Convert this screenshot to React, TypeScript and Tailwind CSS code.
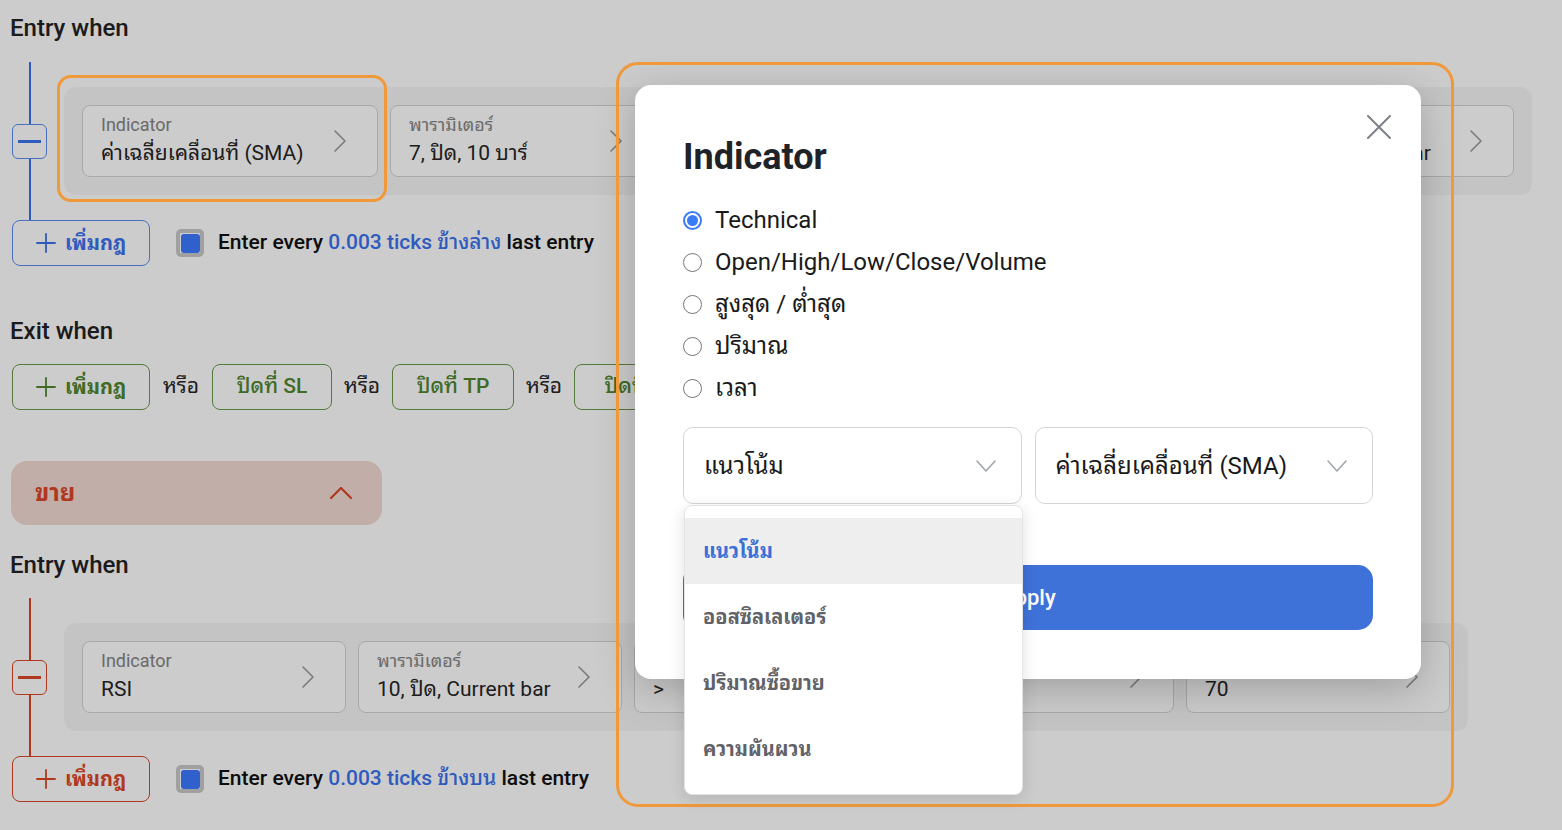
import React from "react";

type CardData = { label: string; value: string; w: string };

const buyCards: CardData[] = [
  { label: "Indicator", value: "ค่าเฉลี่ยเคลื่อนที่ (SMA)", w: "w-[296px]" },
  { label: "พารามิเตอร์", value: "7, ปิด, 10 บาร์", w: "w-[264px]" },
  { label: "เงื่อนไข", value: "ตัดขึ้น", w: "w-[264px]" },
  { label: "Indicator", value: "ค่าเฉลี่ยเคลื่อนที่ (SMA)", w: "w-[296px]" },
  { label: "พารามิเตอร์", value: "7, ปิด, Current bar", w: "w-[264px]" },
];

const sellCards: CardData[] = [
  { label: "Indicator", value: "RSI", w: "w-[264px]" },
  { label: "พารามิเตอร์", value: "10, ปิด, Current bar", w: "w-[264px]" },
  { label: "เงื่อนไข", value: ">", w: "w-[264px]" },
  { label: "เปรียบเทียบกับ", value: "ค่าคงที่", w: "w-[264px]" },
  { label: "ค่า", value: "70", w: "w-[264px]" },
];

const radios = ["Technical", "Open/High/Low/Close/Volume", "สูงสุด / ต่ำสุด", "ปริมาณ", "เวลา"];
const groups = ["แนวโน้ม", "ออสซิลเลเตอร์", "ปริมาณซื้อขาย", "ความผันผวน"];

function ChevronRight() {
  return (
    <svg width="12" height="22" viewBox="0 0 12 22" fill="none" className="shrink-0 text-[#9a9a9a]">
      <polyline points="1,1 11,11 1,21" stroke="currentColor" strokeWidth="1.6" strokeLinecap="round" strokeLinejoin="round" />
    </svg>
  );
}

function ChevronDown() {
  return (
    <svg width="20" height="12" viewBox="0 0 20 12" fill="none" className="shrink-0 text-[#a2a6ad]">
      <polyline points="1,1 10,11 19,1" stroke="currentColor" strokeWidth="1.6" strokeLinecap="round" strokeLinejoin="round" />
    </svg>
  );
}

function Plus() {
  return (
    <svg width="20" height="20" viewBox="0 0 20 20" fill="none">
      <path d="M10 1v18M1 10h18" stroke="currentColor" strokeWidth="1.8" strokeLinecap="round" />
    </svg>
  );
}

function Card({ label, value, w }: CardData) {
  return (
    <div className={`${w} flex h-[72px] shrink-0 items-center rounded-lg border border-[#d4d4d4] bg-white pl-[18px] pr-[31px]`}>
      <div className="min-w-0 flex-1">
        <div className="truncate text-[18px] leading-5 text-[#868686]">{label}</div>
        <div className="mt-1 truncate text-[21px] leading-7 text-[#262626]">{value}</div>
      </div>
      <ChevronRight />
    </div>
  );
}

function RuleBlock({ tone, cards }: { tone: "blue" | "red"; cards: CardData[] }) {
  const blue = tone === "blue";
  const line = blue ? "bg-[#3b72ef]" : "bg-[#dc4727]";
  return (
    <div className="flex h-[158px]">
      <div className="flex w-[35px] shrink-0 flex-col items-center">
        <div className={`w-[2px] flex-1 ${line}`} />
        <div
          className={`flex h-[35px] w-[35px] items-center justify-center rounded-md border bg-white ${
            blue ? "border-[#5c8bf0]" : "border-[#dc4727]"
          }`}
        >
          <div className={`h-[3px] w-[23px] ${line}`} />
        </div>
        <div className={`w-[2px] flex-1 ${line}`} />
      </div>
      <div className="ml-[17px] flex gap-3 self-center rounded-xl bg-[#f5f5f5] p-[18px]">
        {cards.map((c, i) => (
          <Card key={i} {...c} />
        ))}
      </div>
    </div>
  );
}

function AddRow({ tone, where }: { tone: "blue" | "red"; where: string }) {
  const blue = tone === "blue";
  return (
    <div className="flex items-center">
      <button
        className={`flex h-[46px] w-[138px] items-center justify-center gap-[9px] rounded-lg border bg-white ${
          blue ? "border-[#5c8bf0] text-[#3b72ef]" : "border-[#dc4727] text-[#dc4727]"
        }`}
      >
        <Plus />
        <span className="text-[20px] font-bold">เพิ่มกฎ</span>
      </button>
      <div className="ml-[26px] flex h-[28px] w-[28px] items-center justify-center rounded-[5px] border-[4px] border-[#c9c9c9] bg-white">
        <div className="h-[19px] w-[19px] rounded-[3px] bg-[#3c78ff]" />
      </div>
      <p className="ml-[14px] text-[21px] font-medium text-[#111]">
        Enter every <span className="text-[#3b72ef]">0.003 ticks {where}</span> last entry
      </p>
    </div>
  );
}

function Heading({ children }: { children: React.ReactNode }) {
  return <h2 className="-ml-[2px] text-[24px] font-medium leading-7 text-[#222]">{children}</h2>;
}

export default function App() {
  return (
    <div className="relative h-[830px] w-[1562px] overflow-hidden bg-white font-['Roboto','Noto_Sans_Thai_Looped','Noto_Sans_Thai','Noto_Sans',sans-serif]">
      {/* page */}
      <div className="pl-3 pt-[14px]">
        <Heading>Entry when</Heading>
        <div className="mt-[20px]">
          <RuleBlock tone="blue" cards={buyCards} />
        </div>
        <AddRow tone="blue" where="ข้างล่าง" />

        <div className="mt-[51px]">
          <Heading>Exit when</Heading>
        </div>
        <div className="mt-[19px] flex items-center text-[21px]">
          <button className="flex h-[46px] w-[138px] items-center justify-center gap-[9px] rounded-lg border border-[#6a9a4c] bg-white text-[#4f862e]">
            <Plus />
            <span className="text-[20px] font-bold">เพิ่มกฎ</span>
          </button>
          <span className="mx-[13px] text-[#262626]">หรือ</span>
          <button className="h-[46px] w-[120px] rounded-lg border border-[#6a9a4c] bg-white font-medium text-[#4f862e]">ปิดที่ SL</button>
          <span className="mx-[12px] text-[#262626]">หรือ</span>
          <button className="h-[46px] w-[122px] rounded-lg border border-[#6a9a4c] bg-white font-medium text-[#4f862e]">ปิดที่ TP</button>
          <span className="mx-[12px] text-[#262626]">หรือ</span>
          <button className="h-[46px] w-[140px] rounded-lg border border-[#6a9a4c] bg-white font-medium text-[#4f862e]">ปิดที่เวลา</button>
        </div>

        <div className="-ml-px mt-[51px] flex h-16 w-[371px] items-center justify-between rounded-2xl bg-[#f3dad3] pl-6 pr-[30px]">
          <span className="text-[24px] font-bold text-[#dc4727]">ขาย</span>
          <svg width="22" height="12" viewBox="0 0 22 12" fill="none" className="text-[#dc4727]">
            <polyline points="1,11 11,1 21,11" stroke="currentColor" strokeWidth="2.2" strokeLinecap="round" strokeLinejoin="round" />
          </svg>
        </div>

        <div className="mt-[26px]">
          <Heading>Entry when</Heading>
        </div>
        <div className="mt-[19px]">
          <RuleBlock tone="red" cards={sellCards} />
        </div>
        <AddRow tone="red" where="ข้างบน" />
      </div>

      {/* backdrop */}
      <div className="absolute inset-0 bg-black/20" />

      {/* modal */}
      <div className="absolute left-[635px] top-[85px] w-[786px] rounded-2xl bg-white px-12 pb-[49px] pt-[52px] shadow-[0_10px_40px_rgba(0,0,0,0.22)]">
        <button className="absolute right-[30px] top-[30px] text-[#7d8089]" aria-label="close">
          <svg width="24" height="24" viewBox="0 0 24 24" fill="none">
            <path d="M1 1l22 22M23 1L1 23" stroke="currentColor" strokeWidth="2" strokeLinecap="round" />
          </svg>
        </button>
        <h1 className="text-[36px] font-bold leading-10 text-[#1f2328]">Indicator</h1>

        <div className="mt-[22px] flex flex-col">
          {radios.map((r, i) => (
            <label key={r} className="flex h-[42px] items-center gap-[13px] text-[24px] text-[#1a1a1a]">
              {i === 0 ? (
                <span className="flex h-[19px] w-[19px] shrink-0 items-center justify-center rounded-full border-2 border-[#3b7cf5]">
                  <span className="h-[11px] w-[11px] rounded-full bg-[#3b7cf5]" />
                </span>
              ) : (
                <span className="h-[19px] w-[19px] shrink-0 rounded-full border-[1.5px] border-[#767676]" />
              )}
              {r}
            </label>
          ))}
        </div>

        <div className="mt-[18px] grid grid-cols-2 gap-[13px]">
          <div className="relative">
            <div className="flex h-[77px] items-center justify-between rounded-[10px] border border-[#d3d5db] pl-5 pr-[25px] text-[24px] text-[#1a1a1a]">
              แนวโน้ม
              <ChevronDown />
            </div>
            <div className="absolute left-px top-full z-10 mt-px w-[339px] rounded-lg border border-[#e3e3e3] bg-white py-3 shadow-[0_4px_16px_rgba(0,0,0,0.12)]">
              {groups.map((g, i) => (
                <div
                  key={g}
                  className={`flex h-[66px] items-center px-[18px] text-[20px] font-bold ${
                    i === 0 ? "bg-[#eeeeee] text-[#3a6fd8]" : "text-[#5f6368]"
                  }`}
                >
                  {g}
                </div>
              ))}
            </div>
          </div>
          <div className="flex h-[77px] items-center justify-between rounded-[10px] border border-[#d3d5db] pl-5 pr-[25px] text-[24px] text-[#1a1a1a]">
            ค่าเฉลี่ยเคลื่อนที่ (SMA)
            <ChevronDown />
          </div>
        </div>

        <button className="mt-[61px] h-[65px] w-full rounded-[15px] bg-[#3f72d8] text-[22px] font-medium text-white">Apply</button>
      </div>

      {/* annotation frames */}
      <div className="pointer-events-none absolute left-[57px] top-[75px] h-[127px] w-[330px] rounded-[14px] border-[3px] border-[#f0993a]" />
      <div className="pointer-events-none absolute left-[616px] top-[62px] h-[745px] w-[838px] rounded-[22px] border-[3px] border-[#f0993a]" />
    </div>
  );
}
